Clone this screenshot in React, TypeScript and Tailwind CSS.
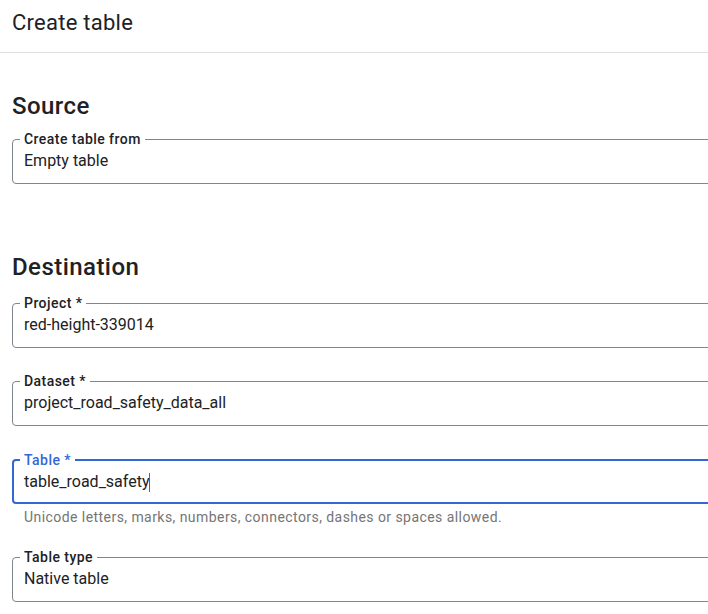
type FieldProps = {
  label: string;
  value: string;
  focused?: boolean;
  className?: string;
};

/** Outlined text field with a notched label, like the Cloud console form fields. */
function OutlinedField({ label, value, focused = false, className = "" }: FieldProps) {
  return (
    <fieldset
      className={[
        "w-[760px] rounded-[4px] m-0",
        focused
          ? "border-2 border-[#3367d6] pl-[10px] pb-[8px]"
          : "border border-[#80868b] pl-[11px] pb-[10px]",
        className,
      ].join(" ")}
    >
      <legend
        className={[
          "-ml-1 px-1 text-sm leading-5 font-medium tracking-[0.45px]",
          focused ? "text-[#3367d6]" : "text-[#202124]",
        ].join(" ")}
      >
        {label}
      </legend>
      <div className="text-base leading-6 text-[#202124] flex items-center">
        <span>{value}</span>
        {focused && <span className="inline-block w-px h-[19px] bg-[#3367d6]" />}
      </div>
    </fieldset>
  );
}

export default function App() {
  return (
    <div
      className="w-full min-h-screen bg-white overflow-hidden"
      style={{ fontFamily: "Roboto, 'Noto Sans', Arial, sans-serif" }}
    >
      <header className="h-[53px] pt-[9px] pl-3 border-b border-[#e0e0e0]">
        <h1 className="text-[22px] leading-7 text-[#202124] font-normal tracking-[0.25px]">
          Create table
        </h1>
      </header>

      <main className="px-3">
        <h2 className="mt-[37px] text-2xl leading-8 font-medium text-[#202124] tracking-[0.45px]">
          Source
        </h2>
        <OutlinedField className="mt-[7px]" label="Create table from" value="Empty table" />

        <h2 className="mt-[67px] text-2xl leading-8 font-medium text-[#202124] tracking-[0.45px]">
          Destination
        </h2>
        <OutlinedField className="mt-[10px]" label="Project *" value="red-height-339014" />
        <OutlinedField className="mt-[23px]" label="Dataset *" value="project_road_safety_data_all" />
        <OutlinedField className="mt-[24px]" label="Table *" value="table_road_safety" focused />
        <p className="mt-[3px] pl-3 text-sm leading-5 text-[#757575] tracking-[0.44px]">
          Unicode letters, marks, numbers, connectors, dashes or spaces allowed.
        </p>
        <OutlinedField className="mt-[20px]" label="Table type" value="Native table" />
      </main>
    </div>
  );
}
